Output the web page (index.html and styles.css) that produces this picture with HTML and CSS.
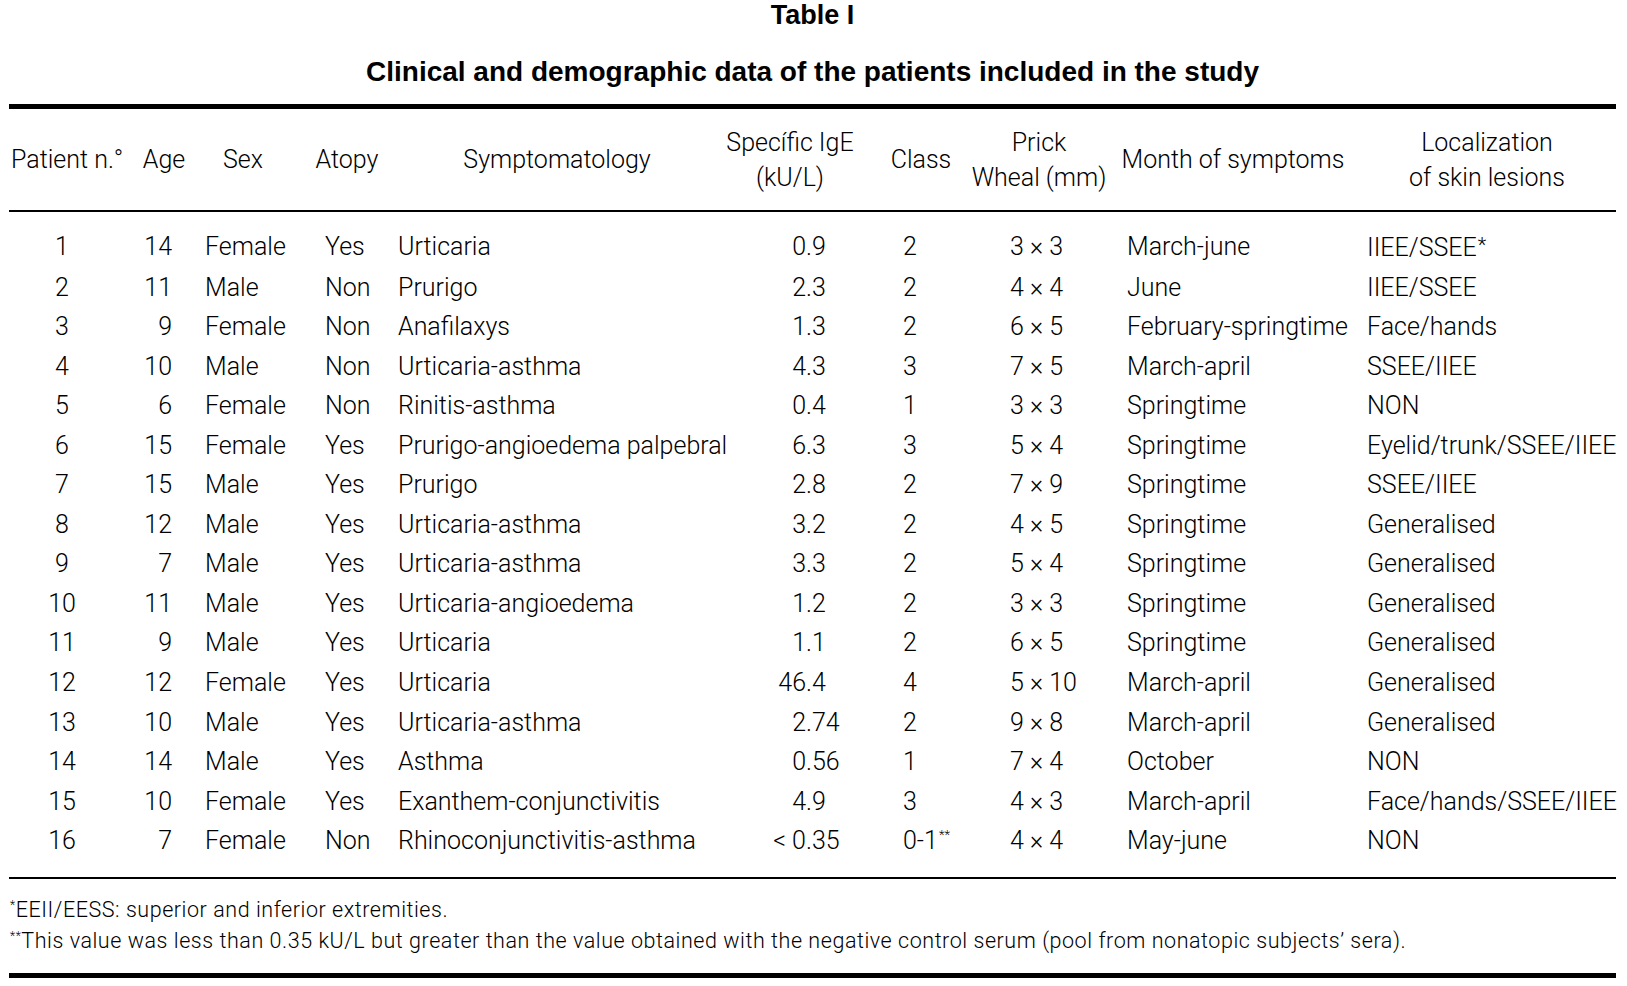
FILE: index.html
```html
<!DOCTYPE html>
<html lang="en">
<head>
<meta charset="utf-8">
<title>Table I</title>
<link rel="stylesheet" href="styles.css">
</head>
<body>
<div class="page">
  <h1 class="title">Table I</h1>
  <h2 class="subtitle">Clinical and demographic data of the patients included in the study</h2>
  <table class="data">
    <colgroup>
      <col class="w1"><col class="w2"><col class="w3"><col class="w4"><col class="w5">
      <col class="w6"><col class="w7"><col class="w8"><col class="w9"><col class="w10">
    </colgroup>
    <thead>
      <tr>
        <th class="h-pat">Patient n.°</th>
        <th class="h-age">Age</th>
        <th>Sex</th>
        <th>Atopy</th>
        <th class="h-sym">Symptomatology</th>
        <th>Specífic IgE<br>(kU/L)</th>
        <th class="h-cls">Class</th>
        <th>Prick<br>Wheal (mm)</th>
        <th>Month of symptoms</th>
        <th>Localization<br>of skin lesions</th>
      </tr>
    </thead>
    <tbody>
      <tr><td class="c-pat">1</td><td class="c-age">14</td><td class="c-sex">Female</td><td class="c-ato">Yes</td><td class="c-sym">Urticaria</td><td class="c-ige"><span class="int">0</span>.9</td><td class="c-cls">2</td><td class="c-pri">3 × 3</td><td class="c-mon">March-june</td><td class="c-loc">IIEE/SSEE<span class="ast">*</span></td></tr>
      <tr><td class="c-pat">2</td><td class="c-age">11</td><td class="c-sex">Male</td><td class="c-ato">Non</td><td class="c-sym">Prurigo</td><td class="c-ige"><span class="int">2</span>.3</td><td class="c-cls">2</td><td class="c-pri">4 × 4</td><td class="c-mon">June</td><td class="c-loc">IIEE/SSEE</td></tr>
      <tr><td class="c-pat">3</td><td class="c-age">9</td><td class="c-sex">Female</td><td class="c-ato">Non</td><td class="c-sym">Anafilaxys</td><td class="c-ige"><span class="int">1</span>.3</td><td class="c-cls">2</td><td class="c-pri">6 × 5</td><td class="c-mon">February-springtime</td><td class="c-loc">Face/hands</td></tr>
      <tr><td class="c-pat">4</td><td class="c-age">10</td><td class="c-sex">Male</td><td class="c-ato">Non</td><td class="c-sym">Urticaria-asthma</td><td class="c-ige"><span class="int">4</span>.3</td><td class="c-cls">3</td><td class="c-pri">7 × 5</td><td class="c-mon">March-april</td><td class="c-loc">SSEE/IIEE</td></tr>
      <tr><td class="c-pat">5</td><td class="c-age">6</td><td class="c-sex">Female</td><td class="c-ato">Non</td><td class="c-sym">Rinitis-asthma</td><td class="c-ige"><span class="int">0</span>.4</td><td class="c-cls">1</td><td class="c-pri">3 × 3</td><td class="c-mon">Springtime</td><td class="c-loc">NON</td></tr>
      <tr><td class="c-pat">6</td><td class="c-age">15</td><td class="c-sex">Female</td><td class="c-ato">Yes</td><td class="c-sym">Prurigo-angioedema palpebral</td><td class="c-ige"><span class="int">6</span>.3</td><td class="c-cls">3</td><td class="c-pri">5 × 4</td><td class="c-mon">Springtime</td><td class="c-loc">Eyelid/trunk/SSEE/IIEE</td></tr>
      <tr><td class="c-pat">7</td><td class="c-age">15</td><td class="c-sex">Male</td><td class="c-ato">Yes</td><td class="c-sym">Prurigo</td><td class="c-ige"><span class="int">2</span>.8</td><td class="c-cls">2</td><td class="c-pri">7 × 9</td><td class="c-mon">Springtime</td><td class="c-loc">SSEE/IIEE</td></tr>
      <tr><td class="c-pat">8</td><td class="c-age">12</td><td class="c-sex">Male</td><td class="c-ato">Yes</td><td class="c-sym">Urticaria-asthma</td><td class="c-ige"><span class="int">3</span>.2</td><td class="c-cls">2</td><td class="c-pri">4 × 5</td><td class="c-mon">Springtime</td><td class="c-loc">Generalised</td></tr>
      <tr><td class="c-pat">9</td><td class="c-age">7</td><td class="c-sex">Male</td><td class="c-ato">Yes</td><td class="c-sym">Urticaria-asthma</td><td class="c-ige"><span class="int">3</span>.3</td><td class="c-cls">2</td><td class="c-pri">5 × 4</td><td class="c-mon">Springtime</td><td class="c-loc">Generalised</td></tr>
      <tr><td class="c-pat">10</td><td class="c-age">11</td><td class="c-sex">Male</td><td class="c-ato">Yes</td><td class="c-sym">Urticaria-angioedema</td><td class="c-ige"><span class="int">1</span>.2</td><td class="c-cls">2</td><td class="c-pri">3 × 3</td><td class="c-mon">Springtime</td><td class="c-loc">Generalised</td></tr>
      <tr><td class="c-pat">11</td><td class="c-age">9</td><td class="c-sex">Male</td><td class="c-ato">Yes</td><td class="c-sym">Urticaria</td><td class="c-ige"><span class="int">1</span>.1</td><td class="c-cls">2</td><td class="c-pri">6 × 5</td><td class="c-mon">Springtime</td><td class="c-loc">Generalised</td></tr>
      <tr><td class="c-pat">12</td><td class="c-age">12</td><td class="c-sex">Female</td><td class="c-ato">Yes</td><td class="c-sym">Urticaria</td><td class="c-ige"><span class="int">46</span>.4</td><td class="c-cls">4</td><td class="c-pri">5 × 10</td><td class="c-mon">March-april</td><td class="c-loc">Generalised</td></tr>
      <tr><td class="c-pat">13</td><td class="c-age">10</td><td class="c-sex">Male</td><td class="c-ato">Yes</td><td class="c-sym">Urticaria-asthma</td><td class="c-ige"><span class="int">2</span>.74</td><td class="c-cls">2</td><td class="c-pri">9 × 8</td><td class="c-mon">March-april</td><td class="c-loc">Generalised</td></tr>
      <tr><td class="c-pat">14</td><td class="c-age">14</td><td class="c-sex">Male</td><td class="c-ato">Yes</td><td class="c-sym">Asthma</td><td class="c-ige"><span class="int">0</span>.56</td><td class="c-cls">1</td><td class="c-pri">7 × 4</td><td class="c-mon">October</td><td class="c-loc">NON</td></tr>
      <tr><td class="c-pat">15</td><td class="c-age">10</td><td class="c-sex">Female</td><td class="c-ato">Yes</td><td class="c-sym">Exanthem-conjunctivitis</td><td class="c-ige"><span class="int">4</span>.9</td><td class="c-cls">3</td><td class="c-pri">4 × 3</td><td class="c-mon">March-april</td><td class="c-loc">Face/hands/SSEE/IIEE</td></tr>
      <tr><td class="c-pat">16</td><td class="c-age">7</td><td class="c-sex">Female</td><td class="c-ato">Non</td><td class="c-sym">Rhinoconjunctivitis-asthma</td><td class="c-ige"><span class="int">&lt; 0</span>.35</td><td class="c-cls">0-1<sup class="sup">**</sup></td><td class="c-pri">4 × 4</td><td class="c-mon">May-june</td><td class="c-loc">NON</td></tr>
    </tbody>
  </table>
  <div class="notes">
    <p><sup class="nsup">*</sup>EEII/EESS: superior and inferior extremities.</p>
    <p><sup class="nsup">**</sup>This value was less than 0.35 kU/L but greater than the value obtained with the negative control serum (pool from nonatopic subjects’ sera).</p>
  </div>
</div>
</body>
</html>
```
FILE: styles.css
```css
html, body {
  margin: 0;
  padding: 0;
  background: #fff;
  color: #000;
}

.page {
  width: 1607px;
  padding: 0 11px 0 9px;
}

.title,
.subtitle {
  margin: 0;
  font-family: "Liberation Sans", Arial, sans-serif;
  font-weight: 700;
  font-size: 27px;
  line-height: 30px;
  text-align: center;
}

.subtitle {
  margin-top: 27px;
  font-size: 28px;
}

.data {
  margin-top: 17px;
  width: 1607px;
  table-layout: fixed;
  border-collapse: collapse;
  font-family: Roboto, "Liberation Sans", sans-serif;
  font-weight: 350;
  font-stretch: 95%;
  font-size: 25px;
  white-space: nowrap;
}

.w1 { width: 121px; }
.w2 { width: 56px; }
.w3 { width: 114px; }
.w4 { width: 94px; }
.w5 { width: 331px; }
.w6 { width: 130px; }
.w7 { width: 115px; }
.w8 { width: 138px; }
.w9 { width: 250px; }
.w10 { width: 258px; }

.data thead tr {
  border-top: 5px solid #000;
  border-bottom: 2px solid #000;
}

.data th {
  height: 101px;
  padding: 0;
  font-weight: 350;
  line-height: 35px;
  text-align: center;
  vertical-align: middle;
}

.data th.h-pat { text-align: left; padding-left: 2px; }
.data th.h-age { padding-left: 12px; }
.data th.h-sym { padding-right: 5px; }
.data th.h-cls { padding-left: 17px; }

.data tbody tr:last-child {
  border-bottom: 2px solid #000;
}

.data td {
  padding: 0;
  line-height: 39.55px;
  text-align: left;
}

.data tbody tr:first-child td { padding-top: 14px; }
.data tbody tr:last-child td { padding-bottom: 16px; }

.c-pat { text-align: center !important; padding-right: 15px !important; }
.c-age { text-align: right !important; padding-right: 14px !important; }
.c-sex { padding-left: 19px !important; }
.c-ato { padding-left: 25px !important; }
.c-sym { padding-left: 4px !important; }
.c-cls { padding-left: 48px !important; }
.c-pri { padding-left: 40px !important; }
.c-mon { padding-left: 19px !important; }
.c-loc { padding-left: 9px !important; }

.int {
  display: inline-block;
  width: 81px;
  text-align: right;
}

.ast {
  font-size: 20px;
  vertical-align: 4px;
  margin-left: 1px;
}

.sup {
  font-size: 13px;
  vertical-align: 10px;
  line-height: 0;
  margin-left: 1px;
}

.notes {
  border-bottom: 5px solid #000;
  padding: 15px 0 17px;
  font-family: Roboto, "Liberation Sans", sans-serif;
  font-weight: 300;
  font-size: 21.5px;
  letter-spacing: 0.55px;
  line-height: 31px;
  white-space: nowrap;
}

.notes p {
  margin: 0;
  padding-left: 1px;
}

.nsup {
  font-size: 12px;
  vertical-align: 8px;
  line-height: 0;
}
```
